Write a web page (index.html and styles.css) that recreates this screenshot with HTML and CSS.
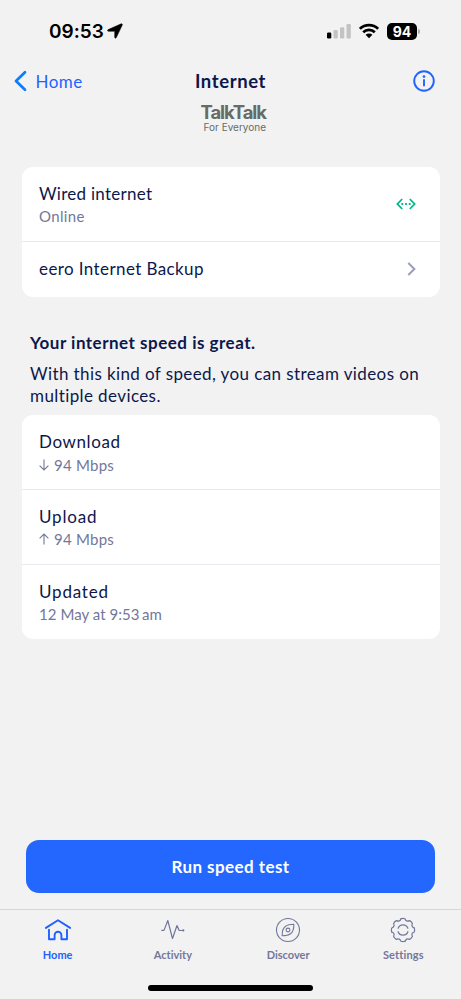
FILE: index.html
```html
<!DOCTYPE html>
<html lang="en">
<head>
<meta charset="utf-8">
<title>Internet</title>
<link rel="stylesheet" href="styles.css">
</head>
<body>
<div class="screen">
  <div class="status">
    <div class="status-left">
      <span class="time">09:53</span>
      <svg class="locate" width="16" height="16" viewBox="0 0 16 16"><path d="M14.200 .8a.9.9 0 0 1 1.100 1.200L9.300 14.600c-.5.9-1.600.7-1.600-.3V8.600c0-.2-.1-.3-.3-.3H1.500C.4 8.300.200 7.100 1.200 6.600Z" fill="#000" stroke="#000" stroke-width=".5"/></svg>
    </div>
    <div class="status-right">
      <svg width="24" height="16" viewBox="0 0 24 16"><rect x="0" y="9.500" width="4.300" height="6" rx="1.200" fill="#000"/><g fill="#c3c3c3"><rect x="6.500" y="7" width="4.300" height="8.500" rx="1.200"/><rect x="13" y="4.200" width="4.300" height="11.300" rx="1.200"/><rect x="19.500" y="1" width="4.300" height="14.500" rx="1.200"/></g></svg>
      <svg class="wifi" width="20" height="16" viewBox="0 0 20 16"><g fill="none" stroke="#000" stroke-width="2.700"><path d="M.9 5.800a13 13 0 0 1 18.200 0"/><path d="M4.200 9.300a8.300 8.300 0 0 1 11.600 0"/></g><path d="M6.600 11.800a4.900 4.900 0 0 1 6.800 0L10 15.200Z" fill="#000"/></svg>
      <div class="battery"><span class="level">94</span><span class="nub"></span></div>
    </div>
  </div>

  <header class="nav">
    <a class="back"><svg width="13" height="22" viewBox="0 0 13 22"><path d="M11 2.200 2 11l9 8.800" fill="none" stroke="#0a7cff" stroke-width="2.700" stroke-linecap="round" stroke-linejoin="round"/></svg><span class="back-label">Home</span></a>
    <h1 class="title">Internet</h1>
    <svg class="info" width="22" height="22" viewBox="0 0 22 22"><circle cx="11" cy="11" r="9.800" fill="none" stroke="#1f62ff" stroke-width="1.900"/><circle cx="11" cy="6.600" r="1.350" fill="#1f62ff"/><path d="M11 9.300v7" stroke="#1f62ff" stroke-width="1.900"/></svg>
  </header>
  <div class="brand"><span class="brand-name">TalkTalk</span><span class="brand-tag">For Everyone</span></div>

  <section class="card">
    <div class="row"><div><div class="label l-wired">Wired internet</div><div class="sub s-online">Online</div></div>
      <svg class="wired" width="20" height="12" viewBox="0 0 20 12"><g fill="none" stroke="#00b88a" stroke-width="1.800"><path d="M6.200 1 1.400 6l4.800 5M13.800 1l4.800 5-4.800 5"/><path d="M5.400 6h1.800M9.100 6h1.800M12.800 6h1.800"/></g></svg></div>
    <div class="row short"><div class="label l-eero">eero Internet Backup</div>
      <svg class="chevron" width="9" height="14" viewBox="0 0 9 14"><path d="M1.300 1 7.400 7l-6.100 6" fill="none" stroke="#9c9fb8" stroke-width="2"/></svg></div>
  </section>

  <section class="summary"><h2 class="headline">Your internet speed is great.</h2><p class="copy">With this kind of speed, you can stream videos on<br>multiple devices.</p></section>

  <section class="card">
    <div class="row"><div><div class="label l-down">Download</div><div class="sub speed"><svg class="arrow" width="10" height="12" viewBox="0 0 10 12"><path d="M5 .5v10.500M.6 6.600 5 11l4.400-4.400" fill="none" stroke="#73779a" stroke-width="1.100"/></svg><span class="s-speed">94 Mbps</span></div></div></div>
    <div class="row"><div><div class="label l-up">Upload</div><div class="sub speed"><svg class="arrow" width="10" height="12" viewBox="0 0 10 12"><path d="M5 11.500V1M.6 5.400 5 1l4.400 4.400" fill="none" stroke="#73779a" stroke-width="1.100"/></svg><span class="s-speed">94 Mbps</span></div></div></div>
    <div class="row"><div><div class="label l-upd">Updated</div><div class="sub s-date">12 May at 9:53<span class="thin"></span>am</div></div></div>
  </section>

  <div class="bottom">
    <button class="run">Run speed test</button>
    <nav class="tabs">
      <a class="tab active"><svg width="28" height="26" viewBox="0 0 28 26"><g fill="none" stroke="#1f62ff" stroke-width="1.900" stroke-linecap="round" stroke-linejoin="round"><path d="M1.900 10.900 14 3.200l12.100 7.700"/><path d="M5 12.700v9.500h5.600v-4a3.400 3.400 0 0 1 6.800 0v4H23v-9.500"/></g></svg><span>Home</span></a>
      <a class="tab"><svg width="28" height="26" viewBox="0 0 28 26"><g fill="none" stroke="#73779a" stroke-width="1.200" stroke-linejoin="round" stroke-linecap="round"><path d="M2.800 13.400H5L8.800 3.500 13.500 21.500 18 8.500l2.200 5H24"/><circle cx="24.300" cy="13.400" r=".5" fill="#73779a"/></g></svg><span>Activity</span></a>
      <a class="tab"><svg width="28" height="26" viewBox="0 0 28 26"><g fill="none" stroke="#73779a" stroke-width="1.100" stroke-linejoin="round"><circle cx="14" cy="13" r="11.500"/><path d="M19.800 7.200c.2 4.300-1 8-3.400 9.600-1.700 1.300-4.800 2-8.200 2-.2-4.300 1-8 3.400-9.600 1.700-1.300 4.800-2 8.200-2Z"/><circle cx="14" cy="13" r="1.900"/></g></svg><span>Discover</span></a>
      <a class="tab"><svg width="28" height="26" viewBox="0 0 28 26"><defs><path id="teeth" d="M-2-11.300Q0-12 2-11.300C2.800-9 4.380-8.340 6.580-9.400Q8.480-8.480 9.400-6.580C8.340-4.380 9-2.800 11.300-2"/></defs><g fill="none" stroke="#73779a" stroke-width="1.200" stroke-linecap="round" stroke-linejoin="round"><g transform="translate(14 13)"><use href="#teeth"/><use href="#teeth" transform="rotate(90)"/><use href="#teeth" transform="rotate(180)"/><use href="#teeth" transform="rotate(270)"/></g><path d="M9.100 11.300a5.200 5.200 0 0 1 9.800 0M9.100 14.700a5.200 5.200 0 0 0 9.800 0"/></g></svg><span class="t-settings">Settings</span></a>
    </nav>
    <div class="indicator"></div>
  </div>
</div>
</body>
</html>
```
FILE: styles.css
```css
* { box-sizing: border-box; margin: 0; padding: 0; }
body { background: #f2f2f2; font-family: Lato, "Liberation Sans", sans-serif; font-variant-ligatures: none; color: #0d174b; }
.screen { width: 461px; height: 999px; display: flex; flex-direction: column; overflow: hidden; }
svg { display: block; flex: none; }
.status { height: 62px; display: flex; justify-content: space-between; padding: 0 41px 0 49px; align-items: center; font-family: Inter, sans-serif; color: #000; }
.status-left, .status-right { display: flex; align-items: center; }
.time { font-size: 19px; font-weight: 600; }
.locate { margin-left: 3px; }
.wifi { margin-left: 8px; }
.battery { display: flex; align-items: center; margin-left: 8px; }
.level { width: 30px; height: 17px; border-radius: 5px; background: #000; color: #fff; font-size: 14px; font-weight: 700; line-height: 17px; text-align: center; }
.nub { width: 2px; height: 5px; margin-left: 1px; border-radius: 0 2px 2px 0; background: #b0b0b0; }
.nav { height: 38px; display: grid; grid-template-columns: 1fr auto 1fr; align-items: center; padding: 0 26px 0 14px; }
.back { display: flex; align-items: center; gap: 8.500px; color: #1f62ff; }
.back-label { font-size: 17px; letter-spacing: .5px; }
.title { font-size: 18.500px; font-weight: 700; letter-spacing: .6px; padding-left: 12px; }
.info { justify-self: end; margin-right: -.4px; }
.brand { height: 67px; display: flex; flex-direction: column; align-items: flex-end; width: 266px; padding-top: 1.500px; color: #666b68; font-family: Inter, sans-serif; }
.brand-name { font-size: 18.500px; font-weight: 700; line-height: 20px; letter-spacing: -1.050px; }
.brand-tag { font-size: 10px; line-height: 10px; }
.card { margin: 0 22px; width: 417.500px; background: #fff; border-radius: 11px; }
.row { height: 74.700px; display: flex; justify-content: space-between; align-items: center; padding: 1px 23.500px 0 17px; border-bottom: 1px solid #e9e9ef; }
.row:last-child { border-bottom: 0; }
.short { height: 55px; padding-top: 0; }
.label { font-size: 17px; line-height: 24px; }
.l-wired, .l-up, .l-upd { padding-top: 1px; margin-bottom: -1px; }
.l-wired { letter-spacing: .27px; }
.l-eero { letter-spacing: .4px; }
.l-down { letter-spacing: .6px; }
.l-up { letter-spacing: .8px; }
.l-upd { letter-spacing: .8px; }
.sub { font-size: 15px; line-height: 22px; color: #73779a; }
.s-online { letter-spacing: .35px; }
.s-speed { letter-spacing: .25px; }
.s-date { letter-spacing: .05px; }
.thin { display: inline-block; width: 2.500px; }
.speed { display: flex; align-items: center; gap: 5px; }
.summary { height: 118.500px; padding: 35px 30px 0; }
.headline { font-size: 17px; line-height: 22px; font-weight: 700; letter-spacing: .5px; }
.copy { font-size: 17px; line-height: 22px; margin-top: 9px; white-space: nowrap; letter-spacing: .4px; }
.bottom { margin-top: auto; height: 159px; }
.run { display: block; width: 409px; height: 52.500px; margin: 0 26px; border: 0; border-radius: 13px; background: #2467ff; color: #fff; font: 700 17px Lato, sans-serif; letter-spacing: .43px; }
.tabs { margin-top: 16.500px; border-top: 1px solid #d6d6d8; height: 76px; display: grid; grid-template-columns: repeat(4, 1fr); }
.tab { display: flex; flex-direction: column; align-items: center; gap: 5px; padding-top: 6.600px; font-size: 11px; line-height: 13px; font-weight: 700; color: #73779a; }
.active { color: #1f62ff; }
.t-settings { letter-spacing: .15px; }
.indicator { width: 165px; height: 5.500px; border-radius: 3px; background: #000; margin: 0 auto; }
```
